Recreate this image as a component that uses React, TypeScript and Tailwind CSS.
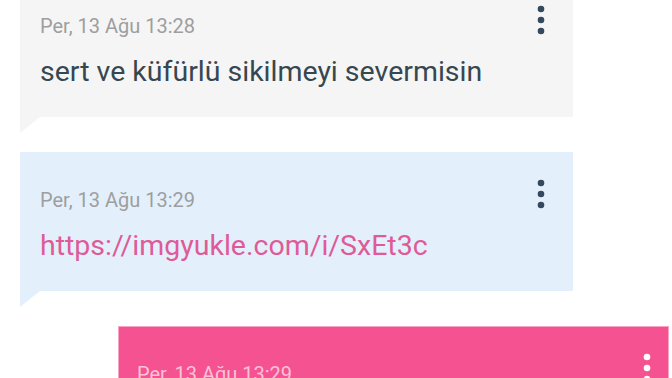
const font = { fontFamily: "Roboto, 'Noto Sans', sans-serif" };

type Msg = {
  time: string;
  body?: string;
  link?: boolean;
  variant: "grey" | "blue" | "pink";
};

const messages: Msg[] = [
  { time: "Per, 13 Ağu 13:28", body: "sert ve küfürlü sikilmeyi severmisin", variant: "grey" },
  { time: "Per, 13 Ağu 13:29", body: "https://imgyukle.com/i/SxEt3c", link: true, variant: "blue" },
  { time: "Per, 13 Ağu 13:29", variant: "pink" },
];

const Dots = ({ color }: { color: string }) => (
  <svg width="8" height="30" viewBox="0 0 8 30" className="shrink-0 -mt-[9px]">
    <circle cx="4" cy="4" r="3.3" fill={color} />
    <circle cx="4" cy="15" r="3.3" fill={color} />
    <circle cx="4" cy="26" r="3.3" fill={color} />
  </svg>
);

const Bubble = ({ msg }: { msg: Msg }) => {
  if (msg.variant === "pink") {
    return (
      <div className="ml-[118px] w-[551px] bg-[#f55291] border border-[#f9a3c4] pt-[35px] pb-[32px] pl-[18px] pr-[17px]">
        <div className="flex justify-between items-start">
          <span className="text-[20px] leading-[24px] text-[#fcc2d8]">{msg.time}</span>
          <Dots color="#ffffff" />
        </div>
      </div>
    );
  }

  const bg = msg.variant === "grey" ? "bg-[#f5f5f5]" : "bg-[#e3f0fc]";
  const tail = msg.variant === "grey" ? "border-t-[#f5f5f5]" : "border-t-[#e3f0fc]";

  return (
    <div className="ml-[20px] w-[553px]">
      <div className={`${bg} pt-[36px] pb-[28px] pl-[20px] pr-[28px]`}>
        <div className="flex justify-between items-start">
          <span className="text-[20px] leading-[24px] text-[#9e9e9e]">{msg.time}</span>
          <Dots color="#34495e" />
        </div>
        <p
          className={`mt-[17px] text-[28.5px] leading-[34px] ${
            msg.link ? "text-[#de5b98]" : "text-[#37474f]"
          }`}
        >
          {msg.body}
        </p>
      </div>
      <div className={`w-0 h-0 border-t-[16px] ${tail} border-r-[20px] border-r-transparent`} />
    </div>
  );
};

export default function App() {
  return (
    <div className="w-[672px] h-[378px] overflow-hidden bg-white" style={font}>
      <div className="flex flex-col gap-[19px] -mt-[22px]">
        {messages.map((m, i) => (
          <Bubble key={i} msg={m} />
        ))}
      </div>
    </div>
  );
}
